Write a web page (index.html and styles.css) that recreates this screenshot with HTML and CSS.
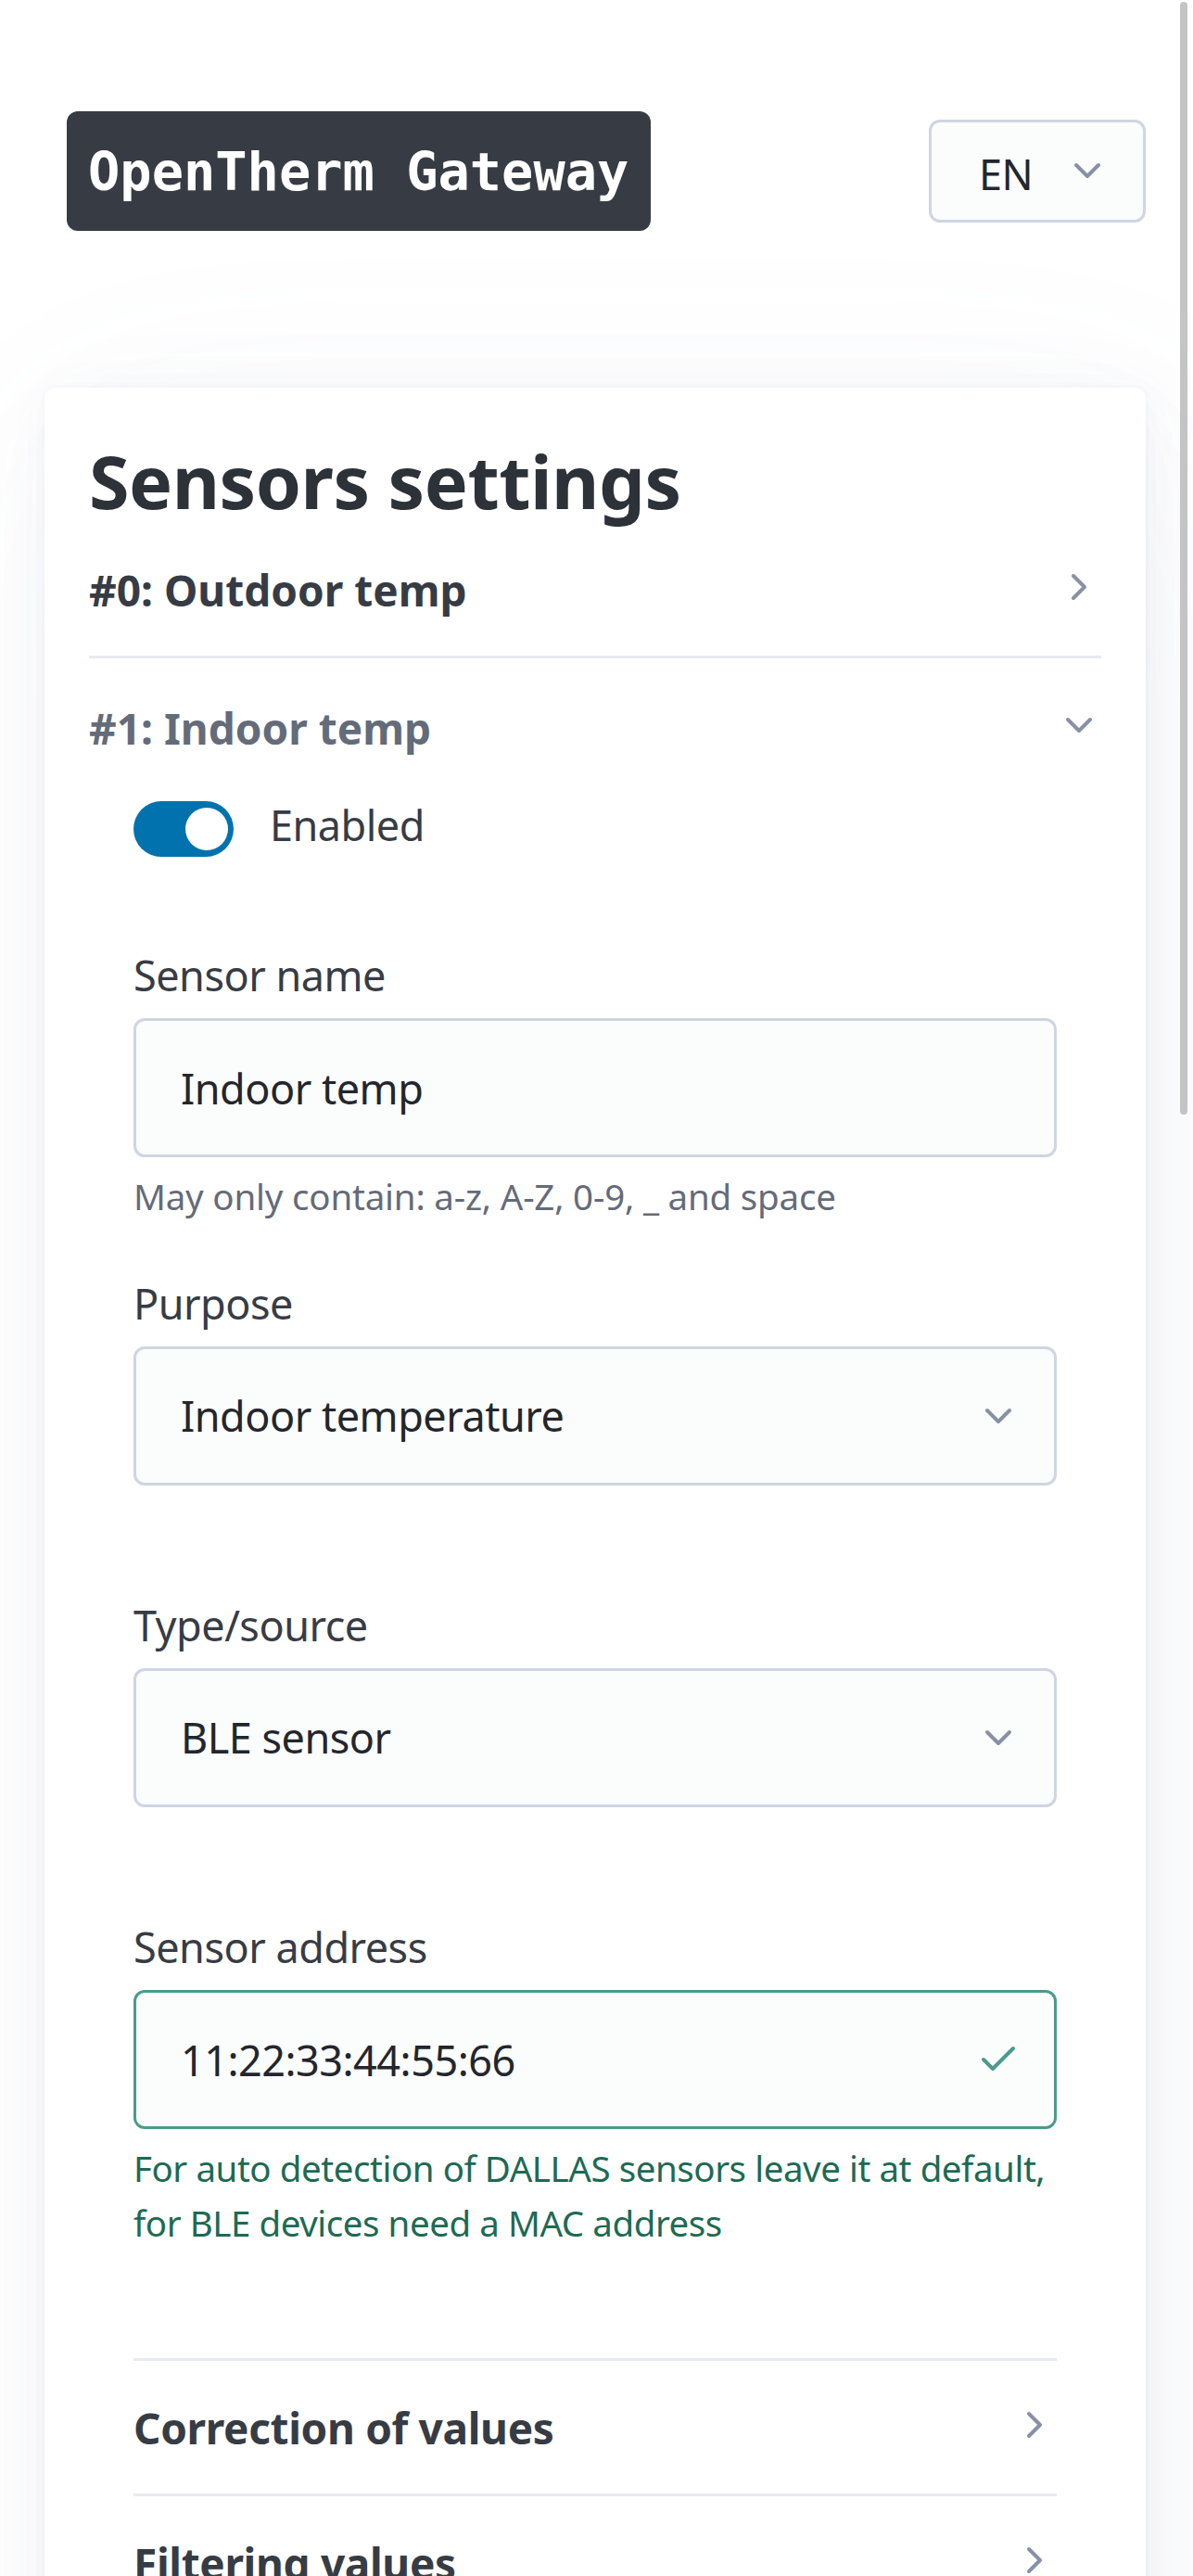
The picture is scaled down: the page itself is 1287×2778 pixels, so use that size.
FILE: index.html
```html
<!DOCTYPE html>
<html lang="en">
<head>
<meta charset="utf-8">
<title>Sensors settings - OpenTherm Gateway</title>
<link rel="stylesheet" href="styles.css">
</head>
<body>
<header class="topbar">
  <div class="logo">OpenTherm Gateway</div>
  <div class="lang">
    <select class="lang-select" aria-label="Language"><option>EN</option><option>RU</option></select>
    <svg class="icon lang-chev" viewBox="0 0 24 24"><polyline points="6 9 12 15 18 9"/></svg>
  </div>
</header>
<main class="page">
  <article class="card">
    <h2 class="title">Sensors settings</h2>

    <details class="item">
      <summary class="sum"><span class="sum-text">#0: Outdoor temp</span><svg class="icon" viewBox="0 0 24 24"><polyline points="9 6 15 12 9 18"/></svg></summary>
    </details>

    <details class="item item-open" open>
      <summary class="sum"><span class="sum-text">#1: Indoor temp</span><svg class="icon" viewBox="0 0 24 24"><polyline points="6 9 12 15 18 9"/></svg></summary>
      <div class="body">
        <label class="switch-row">
          <input type="checkbox" role="switch" class="switch" checked>
          <span>Enabled</span>
        </label>

        <label class="lbl" for="name">Sensor name</label>
        <input id="name" class="ctl" type="text" value="Indoor temp">
        <small class="hint">May only contain: a-z, A-Z, 0-9, _ and space</small>

        <label class="lbl" for="purpose">Purpose</label>
        <div class="wrap gap">
          <select id="purpose" class="ctl"><option>Indoor temperature</option><option>Outdoor temperature</option></select>
          <svg class="icon ctl-icon" viewBox="0 0 24 24"><polyline points="6 9 12 15 18 9"/></svg>
        </div>

        <label class="lbl" for="type">Type/source</label>
        <div class="wrap gap">
          <select id="type" class="ctl"><option>BLE sensor</option><option>DALLAS sensor</option></select>
          <svg class="icon ctl-icon" viewBox="0 0 24 24"><polyline points="6 9 12 15 18 9"/></svg>
        </div>

        <label class="lbl" for="addr">Sensor address</label>
        <div class="wrap">
          <input id="addr" class="ctl ctl-valid" type="text" value="11:22:33:44:55:66">
          <svg class="icon ctl-icon valid-icon" viewBox="0 0 24 24"><polyline points="20 6 9 17 4 12"/></svg>
        </div>
        <small class="hint hint-valid">For auto detection of DALLAS sensors leave it at default,<br>for BLE devices need a MAC address</small>

        <details class="sub">
          <summary class="sum"><span class="sum-text">Correction of values</span><svg class="icon" viewBox="0 0 24 24"><polyline points="9 6 15 12 9 18"/></svg></summary>
        </details>
        <details class="sub">
          <summary class="sum"><span class="sum-text">Filtering values</span><svg class="icon" viewBox="0 0 24 24"><polyline points="9 6 15 12 9 18"/></svg></summary>
        </details>
      </div>
    </details>
  </article>
</main>
<div class="scrollbar" aria-hidden="true"></div>
</body>
</html>
```

FILE: styles.css
```css
html {
  background: #fff;
}

body {
  margin: 0;
  font-family: "Noto Sans", "Open Sans", sans-serif;
  font-size: 45px;
  line-height: 72px;
  letter-spacing: -0.5px;
  color: #373c44;
  background: #fff;
}

/* overlay scrollbar thumb, as drawn by the mobile browser */
.scrollbar {
  position: fixed;
  top: 2px;
  left: 1273px;
  width: 8px;
  height: 1200px;
  border-radius: 4px;
  background: #c4c4c4;
}

/* ---------- header ---------- */
.topbar {
  display: flex;
  justify-content: space-between;
  align-items: center;
  width: 1164px;
  margin-left: 72px;
  padding-top: 120px;
}

.logo {
  font-family: "DejaVu Sans Mono", monospace;
  font-weight: 700;
  font-size: 57px;
  line-height: 127px;
  letter-spacing: 0;
  padding: 2px 24px 0 23px;
  background: #373c44;
  color: #fff;
  border-radius: 12px;
}

.lang {
  position: relative;
}

.lang-select {
  appearance: none;
  -webkit-appearance: none;
  box-sizing: border-box;
  display: block;
  width: 234px;
  height: 111px;
  margin: 0;
  padding: 7px 0 0 51px;
  border: 3px solid #cfd5e2;
  border-radius: 12px;
  background: #fbfcfc;
  font: inherit;
  letter-spacing: -0.5px;
  color: #23262c;
}

.icon {
  width: 48px;
  height: 48px;
  flex: none;
  fill: none;
  stroke: #8891a4;
  stroke-width: 2;
  stroke-linecap: round;
  stroke-linejoin: round;
}

.lang-chev {
  position: absolute;
  right: 39px;
  top: 31px;
  pointer-events: none;
}

/* ---------- card ---------- */
.page {
  padding: 169px 0 48px;
}

.card {
  box-sizing: border-box;
  width: 1188px;
  min-height: 3200px;
  margin: 0 0 0 48px;
  padding: 48px;
  border-radius: 12px;
  background: #fff;
  box-shadow:
    0.7px 1.4px 8.4px rgba(129, 145, 181, 0.017),
    1.6px 3.2px 19.3px rgba(129, 145, 181, 0.024),
    3px 6px 36px rgba(129, 145, 181, 0.03),
    5.4px 10.8px 64.8px rgba(129, 145, 181, 0.036),
    10px 20px 120px rgba(129, 145, 181, 0.043),
    24px 48px 288px rgba(129, 145, 181, 0.06),
    0 0 0 3px rgba(129, 145, 181, 0.015);
}

.title {
  margin: 4px 0 42px;
  font-size: 79px;
  line-height: 97px;
  font-weight: 700;
  letter-spacing: -0.5px;
  color: #2d3138;
}

/* ---------- accordion ---------- */
.item {
  border-bottom: 3px solid #e7eaf0;
  padding-bottom: 50px;
  margin-bottom: 48px;
}

.item-open {
  border-bottom: none;
}

.sum {
  display: flex;
  justify-content: space-between;
  align-items: flex-start;
  height: 48px;
  list-style: none;
  cursor: pointer;
  font-size: 46px;
  font-weight: 700;
  letter-spacing: 0;
  color: #373c44;
}

.sum::-webkit-details-marker {
  display: none;
}

.sum-text {
  display: block;
  line-height: 48px;
  padding-top: 3px;
}

.item-open > .sum {
  color: #646b79;
}

.body {
  margin-top: 48px;
  padding: 0 48px;
}

/* ---------- switch ---------- */
.switch-row {
  display: flex;
  align-items: center;
  height: 72px;
  margin-bottom: 90px;
  color: #373c44;
}

.switch {
  appearance: none;
  -webkit-appearance: none;
  flex: none;
  box-sizing: border-box;
  width: 108px;
  height: 60px;
  margin: 7px 39px 0 0;
  padding: 0;
  border: none;
  border-radius: 30px;
  background: #0172ad;
}

.switch::before {
  content: "";
  display: block;
  width: 46px;
  height: 46px;
  margin: 7px 0 0 56px;
  border-radius: 50%;
  background: #fff;
}

/* ---------- form fields ---------- */
.lbl {
  display: block;
  margin-bottom: 10px;
  line-height: 72px;
  color: #373c44;
}

.wrap {
  position: relative;
}

.gap {
  margin-bottom: 115px;
}

.ctl {
  appearance: none;
  -webkit-appearance: none;
  box-sizing: border-box;
  display: block;
  width: 100%;
  height: 150px;
  margin: 0;
  padding: 36px 48px;
  border: 3px solid #cfd5e2;
  border-radius: 12px;
  background: #fbfcfc;
  font: inherit;
  line-height: 72px;
  letter-spacing: -0.5px;
  color: #23262c;
  outline: none;
}

.ctl-valid {
  border-color: #4c9b8a;
}

.ctl-icon {
  position: absolute;
  right: 39px;
  top: 51px;
  pointer-events: none;
}

.valid-icon {
  stroke: #4c9b8a;
}

.hint {
  display: block;
  margin: 13px 0 50px;
  font-size: 38.5px;
  line-height: 59px;
  letter-spacing: -0.2px;
  color: #646b79;
}

.hint-valid {
  margin-bottom: 116px;
  white-space: nowrap;
  letter-spacing: -0.45px;
  color: #1d6a54;
}

.sub {
  border-top: 3px solid #e7eaf0;
  padding: 45px 0 50px;
}

.sub > .sum {
  letter-spacing: -0.35px;
}
```
